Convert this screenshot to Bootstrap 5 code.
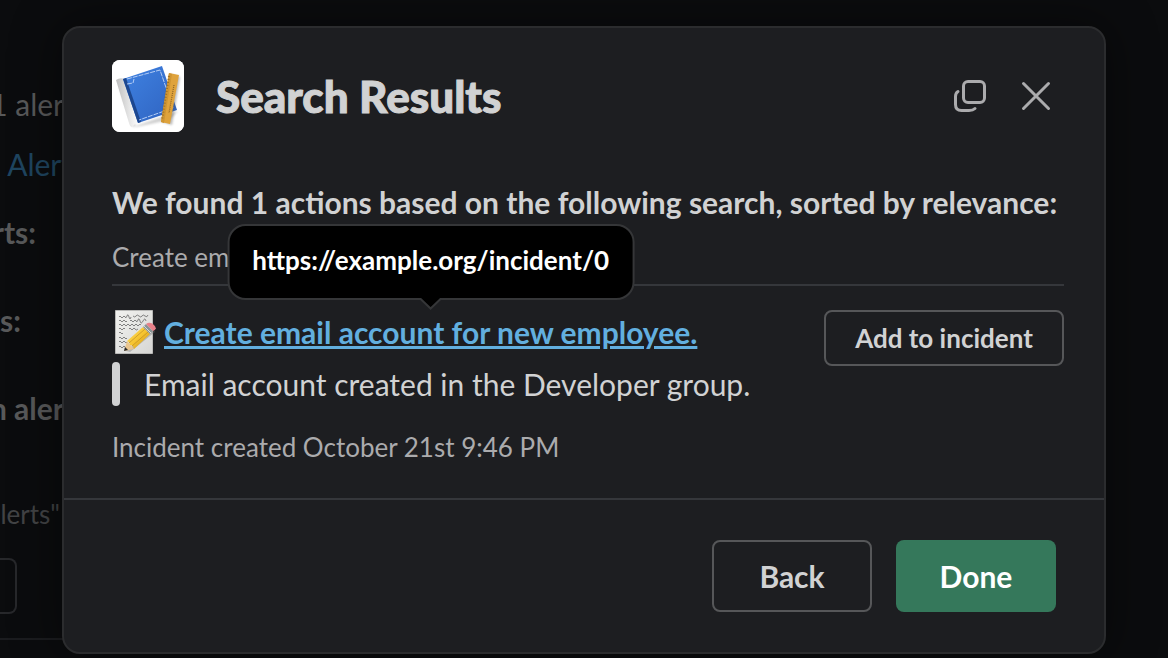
<!DOCTYPE html>
<html lang="en" data-bs-theme="dark">
<head>
<meta charset="utf-8">
<meta name="viewport" content="width=device-width, initial-scale=1">
<title>Search Results</title>
<link href="https://cdn.jsdelivr.net/npm/bootstrap@5.3.0/dist/css/bootstrap.min.css" rel="stylesheet">
<style>
  body { background: #0b0c0e; color: #d1d2d3; font-family: Lato, sans-serif; font-size: 30px; line-height: 44px; }
  .stage { padding: 26px 62px 4px; min-height: 100vh; overflow: hidden; }
  /* dimmed conversation behind the dialog */
  .behind { width: 64px; color: #58595a; padding-top: 82px; }
  .behind > * { display: flex; justify-content: flex-end; white-space: nowrap; }
  .behind a { color: #1f4560; text-decoration: none; margin-right: -8px; }
  .behind .line-short { margin-top: 24px; padding-right: 28px; }
  .behind .line-shorter { margin-top: 44px; padding-right: 43px; }
  .behind .line-wide { margin-top: 44px; }
  .behind .ghost-btn { height: 56px; width: 17px; border: 2px solid #27282b; border-left: 0; border-radius: 0 8px 8px 0; margin-top: 26px; }
  .behind .rule { height: 2px; background: #1b1c1f; margin-top: 24px; }
  .behind .behind-note { margin-top: 66px; padding-right: 4px; font-size: 26px; line-height: 36px; color: #424345; }
  .dialog { background: #1d1e21; border: 2px solid #2b2c2e; border-radius: 18px; box-shadow: 0 0 48px 4px rgba(0, 0, 0, .4); }
  .dialog-head { padding: 32px 48px 0; gap: 32px; }
  .dialog-head h1 { color: #d1d2d3; font-size: 44px; line-height: 60px; font-weight: 900; -webkit-text-stroke: 1px #d1d2d3; }
  .app-icon { width: 72px; height: 72px; border-radius: 8px; background: #fff; overflow: hidden; }
  .icon-btn { padding: 0; border: 0; background: none; color: #ababad; line-height: 0; }
  .dialog-main { padding: 48px 40px 33px 48px; }
  .lead-line { font-size: 30px; line-height: 44px; font-weight: 700; }
  .meta { color: #ababad; font-size: 26px; line-height: 36px; }
  .query { margin: 15px 0 0; }
  .split { border-top: 2px solid #35373b; opacity: 1; margin: 9px 0 24px; }
  .result-link { color: #62afdf; font-weight: 700; text-decoration: underline; text-decoration-thickness: 3px; }
  .result-link:hover { color: #62afdf; }
  .memo { width: 44px; height: 44px; margin-right: 8px; }
  .quote { gap: 24px; margin: 8px 0 23px; }
  .quote-bar { width: 8px; border-radius: 4px; background: #d1d2d3; }
  .tip { left: 50%; bottom: calc(100% + 10px); transform: translateX(-50%); z-index: 3; background: #000; color: #fff; border: 2px solid #353638; border-radius: 18px; padding: 16px 23px 20px; font-size: 26px; line-height: 36px; font-weight: 700; white-space: nowrap; }
  .tip svg { left: 50%; top: 100%; transform: translateX(-50%); }
  .btn-line, .btn-line:hover { border: 2px solid #565759; color: #d1d2d3; }
  .btn-add { width: 240px; height: 56px; border-radius: 8px; font-size: 26px; line-height: 36px; font-weight: 700; padding: 0; }
  .btn-foot { width: 160px; height: 72px; border-radius: 8px; font-size: 30px; line-height: 44px; font-weight: 700; padding: 0; }
  .btn-done, .btn-done:hover { background: #35785b; color: #fff; border: 0; }
  .dialog-foot { border-top: 2px solid #35373b; padding: 40px 48px; gap: 24px; }
</style>
</head>
<body>
<div class="stage position-relative">
  <div class="behind position-absolute top-0 start-0" aria-hidden="true">
    <div>1 aler</div>
    <a href="#" class="mt-3" tabindex="-1">Alert</a>
    <div class="fw-bold line-short">rts:</div>
    <div class="fw-bold line-shorter">ts:</div>
    <div class="fw-bold line-wide">n aler</div>
    <div class="behind-note">lerts"</div>
    <div class="ghost-btn"></div>
    <div class="rule"></div>
  </div>

  <section class="dialog position-relative" role="dialog" aria-labelledby="dialogTitle">
    <header class="dialog-head d-flex align-items-center">
      <svg class="app-icon flex-shrink-0" viewBox="0 0 72 72" aria-hidden="true">
        <defs>
          <linearGradient id="cover" x1="0" y1="0" x2="1" y2="1"><stop offset="0" stop-color="#3f82e2"/><stop offset="1" stop-color="#2f62bf"/></linearGradient>
          <linearGradient id="spine" x1="0" y1="0" x2="1" y2="0"><stop offset="0" stop-color="#bdbdbd"/><stop offset=".55" stop-color="#e4e4e4"/><stop offset="1" stop-color="#fff"/></linearGradient>
          <filter id="soft" x="-20%" y="-20%" width="140%" height="140%"><feGaussianBlur stdDeviation="1.2"/></filter>
        </defs>
        <rect width="72" height="72" fill="#fff"/>
        <path d="M5 22 21 67 66 51 57 60 24 67Z" fill="#777" opacity=".35" filter="url(#soft)"/>
        <path d="M4 20Q8 17 13 19L27 62Q23 63 20 67Q18 67 17 63Z" fill="url(#spine)"/>
        <path d="M11 19 50 6 65 50 26 63Z" fill="url(#cover)"/>
        <path d="M11 19 14 18 29 62 26 63Z" fill="#1d478f"/>
        <path d="M15 19 48 10 61 48 27 60M15 24 21 23 22 19" fill="none" stroke="#b4cdf5" stroke-width="1" stroke-dasharray="5 1"/>
        <path d="M58 14 68 17 60 65 50 62Z" fill="#555" opacity=".4" filter="url(#soft)"/>
        <path d="M57 13 67 15 58 64 49 62Z" fill="#dfa33c"/>
        <path d="M57 13 60 14 52 63 49 62Z" fill="#cf9532"/>
        <path d="M62 25 57 53" stroke="#8a6226" stroke-width="1.2" stroke-dasharray="1 1"/>
        <path d="M57 16 50 60" stroke="#9a6f28" stroke-width="2" stroke-dasharray="1 2"/>
      </svg>
      <h1 class="m-0 flex-grow-1" id="dialogTitle">Search Results</h1>
      <div class="d-flex align-items-center gap-4">
        <button type="button" class="icon-btn" aria-label="Open in new window">
          <svg width="40" height="40" viewBox="0 0 40 40" fill="none" stroke="currentColor" stroke-width="3" stroke-linecap="round"><rect x="9.500" y="5.500" width="21" height="21" rx="4.500"/><path d="M4 15.500Q1.500 17 1.500 20.500V28.500Q1.500 34.500 7.500 34.500H15Q19 34.500 21 32.500"/></svg>
        </button>
        <button type="button" class="icon-btn" aria-label="Close">
          <svg width="38" height="40" viewBox="0 0 38 40" fill="none" stroke="currentColor" stroke-width="3" stroke-linecap="round"><path d="M5.500 7.500 30.500 32.500M30.500 7.500 5.500 32.500"/></svg>
        </button>
      </div>
    </header>

    <main class="dialog-main">
      <p class="lead-line m-0">We found 1 actions based on the following search, sorted by relevance:</p>
      <p class="meta query">Create email</p>
      <hr class="split">
      <div class="d-flex justify-content-between align-items-start">
        <div>
          <div class="d-flex align-items-center">
            <svg class="memo flex-shrink-0" viewBox="0 0 44 44" aria-hidden="true">
              <defs>
                <linearGradient id="sheet" x1="0" y1="0" x2="1" y2="1"><stop offset="0" stop-color="#f2f2ef"/><stop offset="1" stop-color="#d6d6d4"/></linearGradient>
                <linearGradient id="pencil" x1="0" y1="0" x2="1" y2="1"><stop offset="0" stop-color="#ffe36a"/><stop offset=".5" stop-color="#f6c430"/><stop offset="1" stop-color="#bd8515"/></linearGradient>
              </defs>
              <path d="M3.500 .5H40.500V43.500H3.500Z" fill="url(#sheet)" stroke="#b9b9b7"/>
              <path d="M7 7q1-2 2 0t2 0 2 0 2-1 2 1 2 0M21 6q2 2 3 0t3 0 3 0 3 0 3-1M7 11q1-2 2 0t2 0 2 0 2 0M18 11q1-2 2 0t2 0 2 0 2-1 2 1 3 0 3 0M7 15q1-2 2 0t2 0 2 0 2 0 2 0 2 0 2 0 2 0 2 0 2 0 2 0M7 19q1-2 2 0t2 0 2 0M17 19q1-2 2 0t2 0 2 0 3 0M7 23q1-2 2 0t2 0M7 28q1-2 2 0t2 0 2 0 2 0M7 32q1-2 2 0t2 0 2 0 2 0M7 37q1-2 2 0t2 0 2 0" fill="none" stroke="#555" stroke-width=".7"/>
              <path d="M14 41 42 20 43 22 18 42Z" fill="#777" opacity=".4"/>
              <path d="M12 41 15 31 22 39Z" fill="#e9c58e"/>
              <path d="M15 31 31 17 38 24 22 39Q21 35 18 35 18 32 15 31Z" fill="url(#pencil)"/>
              <path d="M17 33 33 19M20 36 36 22" stroke="#c08e20" stroke-width=".7"/>
              <path d="M12 41 13 37 16 40Z" fill="#292929"/>
              <path d="M31 17 34 14 41 21 38 24Z" fill="#8b9495"/>
              <path d="M32 16 39 23" stroke="#d5dada"/>
              <path d="M34 14Q38 11 42 15T41 21Z" fill="#e8818a"/>
            </svg>
            <span class="position-relative">
              <a href="#" class="result-link" aria-describedby="urlTip">Create email account for new employee.</a>
              <span class="tip position-absolute" id="urlTip" role="tooltip">https://example.org/incident/0
                <svg class="position-absolute" width="24" height="12" viewBox="0 0 24 12" aria-hidden="true"><path d="M0-2H24L12 10Z" fill="#000"/><path d="M1 0 12 10.500 23 0" fill="none" stroke="#353638" stroke-width="2"/></svg>
              </span>
            </span>
          </div>
          <blockquote class="quote d-flex"><span class="quote-bar"></span><span>Email account created in the Developer group.</span></blockquote>
        </div>
        <button type="button" class="btn btn-line btn-add flex-shrink-0">Add to incident</button>
      </div>
      <p class="meta m-0">Incident created October 21st 9:46 PM</p>
    </main>

    <footer class="dialog-foot d-flex justify-content-end">
      <button type="button" class="btn btn-line btn-foot">Back</button>
      <button type="button" class="btn btn-done btn-foot">Done</button>
    </footer>
  </section>
</div>
<script src="https://cdn.jsdelivr.net/npm/bootstrap@5.3.0/dist/js/bootstrap.bundle.min.js"></script>
</body>
</html>
